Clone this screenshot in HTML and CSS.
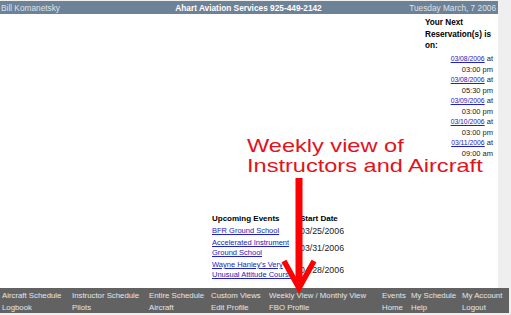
FILE: index.html
```html
<!DOCTYPE html>
<html lang="en">
<head>
<meta charset="UTF-8" />
<title>Ahart Aviation Services</title>
<link rel="stylesheet" href="styles.css">
</head>
<body>

<div class="page">
  <div class="topbar">
    <span class="user">Bill Komanetsky</span>
    <span class="title">Ahart Aviation Services 925-449-2142</span>
    <span class="today">Tuesday March, 7 2006</span>
  </div>

  <div class="main">
    <div class="content">
      <div class="events">
        <div class="ev-head">Upcoming Events</div>
        <div class="ev-head">Start Date</div>
        <a href="#" class="ev-name">BFR Ground School</a>
        <div class="ev-date">03/25/2006</div>
        <a href="#" class="ev-name">Accelerated Instrument Ground School</a>
        <div class="ev-date">03/31/2006</div>
        <a href="#" class="ev-name">Wayne Hanley's Very Unusual Attitude Course</a>
        <div class="ev-date">04/28/2006</div>
      </div>
    </div>

    <div class="reservations">
      <div class="res-title">Your Next Reservation(s) is on:</div>
      <div class="res-item"><a href="#">03/08/2006</a> at<br>03:00 pm</div>
      <div class="res-item"><a href="#">03/08/2006</a> at<br>05:30 pm</div>
      <div class="res-item"><a href="#">03/09/2006</a> at<br>03:00 pm</div>
      <div class="res-item"><a href="#">03/10/2006</a> at<br>03:00 pm</div>
      <div class="res-item"><a href="#">03/11/2006</a> at<br>09:00 am</div>
    </div>
  </div>

  <div class="nav">
    <span>Aircraft Schedule</span>
    <span>Instructor Schedule</span>
    <span>Entire Schedule</span>
    <span>Custom Views</span>
    <span>Weekly View / Monthly View</span>
    <span>Events</span>
    <span>My Schedule</span>
    <span>My Account</span>
    <span>Logbook</span>
    <span>Pilots</span>
    <span>Aircraft</span>
    <span>Edit Profile</span>
    <span>FBO Profile</span>
    <span>Home</span>
    <span>Help</span>
    <span>Logout</span>
  </div>

  <!-- annotation drawn over the screenshot -->
  <div class="callout">Weekly view of<br>Instructors and Aircraft</div>
  <svg class="arrow" width="509" height="313" viewBox="0 0 509 313">
    <rect x="295.5" y="177" width="7" height="104" fill="#f00" />
    <path d="M284 260 L299 287 L314 260" fill="none" stroke="#f00" stroke-width="5.5" />
  </svg>
</div>

</body>
</html>
```

FILE: styles.css
```css
body {
  margin: 0;
  padding: 1px 0 0 0;
  background-color: #efefef;
  font-family: "Liberation Sans", Arial, sans-serif;
  overflow: hidden;
}
a {
  color: #2222c4;
  text-decoration: underline;
}
.page {
  position: relative;
  width: 509px;
  height: 312px;
  display: flex;
  flex-direction: column;
}
.topbar {
  width: 498px;
  height: 13px;
  box-sizing: border-box;
  background-color: #6d8197;
  display: grid;
  grid-template-columns: 1fr auto 1fr;
  align-items: center;
  padding: 0 2px 0 1px;
  font-size: 8.3px;
  color: #dde2e8;
}
.topbar .title {
  font-weight: bold;
  color: white;
}
.topbar .today {
  text-align: right;
}
.main {
  width: 498px;
  flex: 1;
  display: flex;
  background-color: white;
}
.content {
  flex: 1;
  display: flex;
  flex-direction: column;
  justify-content: flex-end;
  padding: 0 0 8px 212px;
}
.events {
  display: grid;
  grid-template-columns: 88px auto;
  row-gap: 2px;
  line-height: 10px;
  font-size: 7.5px;
}
.ev-head {
  font-weight: bold;
  font-size: 8px;
  color: black;
}
.ev-name {
  width: 82px;
}
.ev-date {
  align-self: center;
  font-size: 8.8px;
  color: #222;
}
.reservations {
  width: 68px;
  padding: 3px 5px 0 0;
  color: #222;
}
.res-title {
  font-weight: bold;
  font-size: 8.2px;
  line-height: 11.5px;
  margin-bottom: 2.5px;
  color: black;
}
.res-item {
  text-align: right;
  font-size: 7.5px;
  line-height: 10.5px;
}
.res-item a {
  font-size: 6.8px;
}
.nav {
  height: 25px;
  box-sizing: border-box;
  padding: 1px 0 0 2px;
  background-color: #626262;
  display: grid;
  grid-template-columns: 70px 77px 62px 58px 113px 29px 51px 1fr;
  grid-auto-rows: 12px;
  align-items: center;
  font-size: 7.8px;
  color: #e6e6e6;
  white-space: nowrap;
}
.callout {
  position: absolute;
  left: 247px;
  top: 135px;
  font-size: 19px;
  line-height: 20.4px;
  color: #e3121b;
  transform: scaleX(1.24);
  transform-origin: left top;
  white-space: nowrap;
}
.arrow {
  position: absolute;
  left: 0;
  top: 0;
  pointer-events: none;
}
```
